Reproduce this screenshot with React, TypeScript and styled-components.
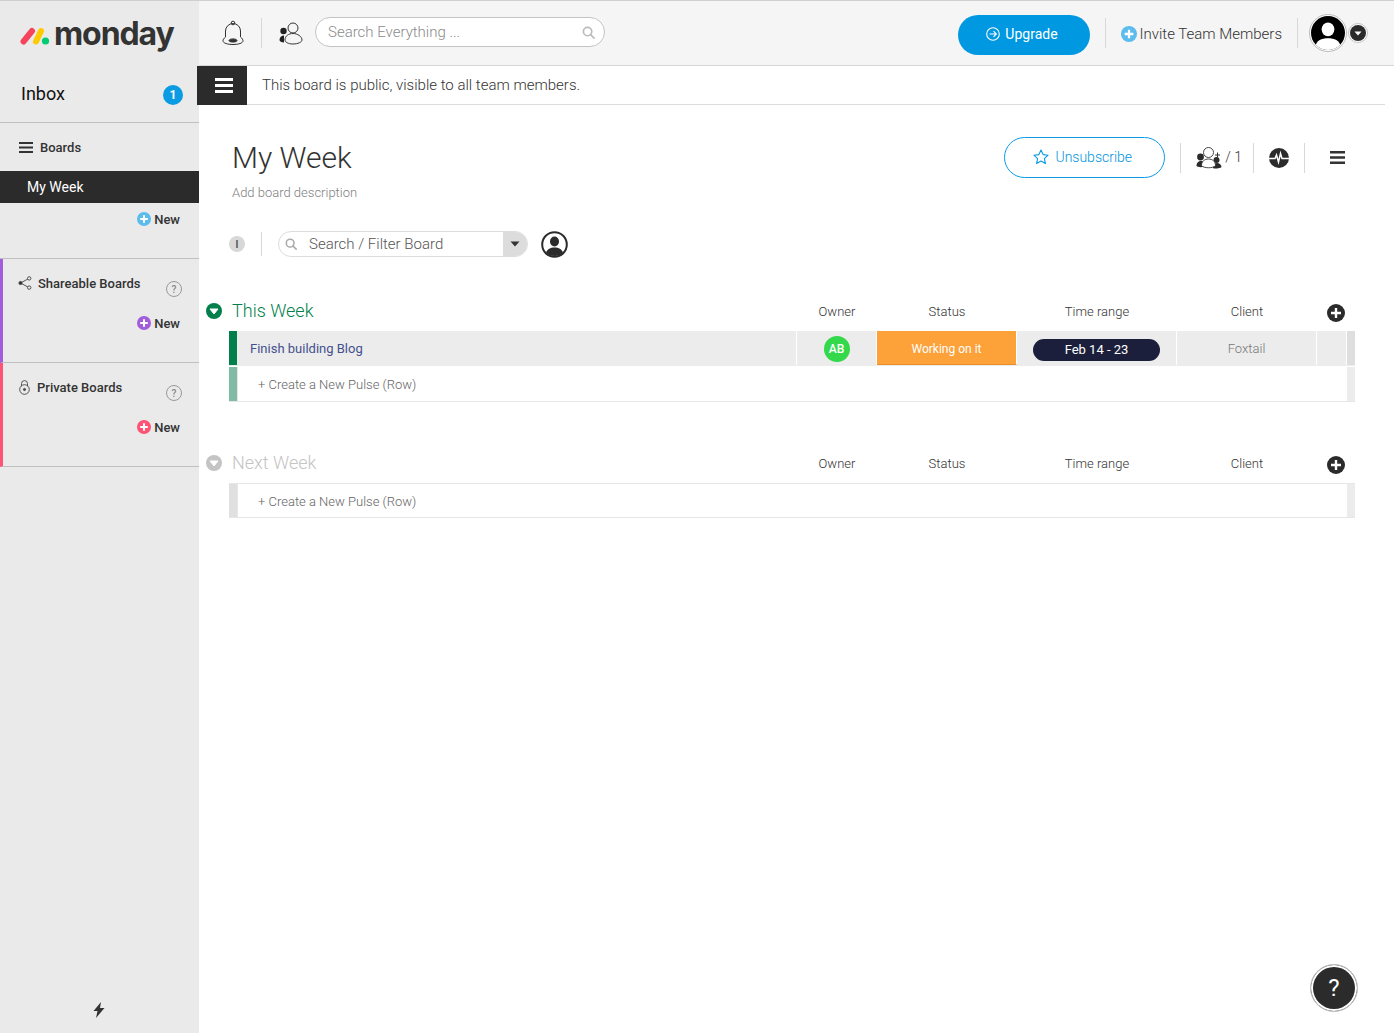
import React from 'react';
import styled, { createGlobalStyle } from 'styled-components';

const GlobalStyle = createGlobalStyle`
  html, body {
    margin: 0;
    padding: 0;
    background: #fff;
    font-family: Roboto, "Liberation Sans", sans-serif;
    color: #333;
  }
  * { box-sizing: border-box; }
`;

const Page = styled.div`
  display: flex;
  width: 1394px;
  height: 1033px;
  overflow: hidden;
  border-top: 1px solid #cfcfcf;
`;

/* sidebar */
const Sidebar = styled.aside`
  display: flex;
  flex-direction: column;
  flex-shrink: 0;
  width: 199px;
  background: #eaeaea;
`;
const LogoRow = styled.div`
  display: flex;
  align-items: center;
  height: 65px;
  padding: 4px 0 0 19px;
`;
const LogoWord = styled.span`
  font-family: Inter, sans-serif;
  font-size: 32px;
  font-weight: 700;
  letter-spacing: -1.1px;
  line-height: 1;
  color: #333;
  margin: -4px 0 0 3px;
`;
const InboxRow = styled.div`
  display: flex;
  align-items: center;
  justify-content: space-between;
  height: 57px;
  padding: 0 16px 2px 21px;
  border-bottom: 1px solid #bfbfbf;
  font-size: 18px;
  color: #111;
`;
const InboxBadge = styled.span`
  display: flex;
  align-items: center;
  justify-content: center;
  width: 20px;
  height: 20px;
  margin-top: 4px;
  border-radius: 50%;
  background: #0a9be3;
  color: #fff;
  font-size: 12px;
  font-weight: 700;
`;
const BoardSection = styled.section<{ $accent?: string; $height: number }>`
  height: ${({ $height }) => $height}px;
  border-left: ${({ $accent }) => ($accent ? `3px solid ${$accent}` : '0')};
  border-bottom: 1px solid #bfbfbf;
`;
const SectionHead = styled.div<{ $iconGap: number; $left: number }>`
  position: relative;
  display: flex;
  align-items: center;
  gap: ${({ $iconGap }) => $iconGap}px;
  height: 48px;
  padding-left: ${({ $left }) => $left}px;
  font-size: 13px;
  font-weight: 500;
  color: #333;
`;
const HelpDot = styled.span`
  position: absolute;
  top: 22px;
  right: 17px;
  display: flex;
  align-items: center;
  justify-content: center;
  width: 16px;
  height: 16px;
  border: 1px solid #999;
  border-radius: 50%;
  color: #888;
  font-size: 10px;
  font-weight: 500;
`;
const ActiveBoard = styled.div`
  display: flex;
  align-items: center;
  height: 32px;
  padding-left: 27px;
  background: #2b2b2b;
  color: #fff;
  font-size: 14px;
`;
const NewRow = styled.div`
  display: flex;
  align-items: center;
  justify-content: flex-end;
  gap: 3px;
  height: 32px;
  padding-right: 19px;
  font-size: 13px;
  font-weight: 500;
  color: #333;
`;
const SidebarFoot = styled.div`
  display: flex;
  justify-content: center;
  margin-top: auto;
  padding: 0 2px 15px 0;
`;

/* main column */
const Main = styled.main`
  display: flex;
  flex-direction: column;
  flex-grow: 1;
  min-width: 0;
`;
const TopBar = styled.header`
  display: flex;
  align-items: center;
  flex-shrink: 0;
  height: 65px;
  padding: 0 26px 0 23px;
  background: #f5f5f5;
  border-bottom: 1px solid #d6d6d6;
`;
const Divider = styled.span<{ $h?: number; $mx: number }>`
  flex-shrink: 0;
  width: 1px;
  height: ${({ $h }) => $h || 30}px;
  margin: 0 ${({ $mx }) => $mx}px;
  background: #d8d8d8;
`;
const GlobalSearch = styled.div`
  display: flex;
  align-items: center;
  justify-content: space-between;
  width: 290px;
  height: 30px;
  margin: -2px 0 0 12px;
  padding: 0 9px 0 12px;
  background: #fff;
  border: 1px solid #c4c4c4;
  border-radius: 15px;
  color: #8a8a8a;
  font-size: 15px;
  font-weight: 300;
`;
const UpgradeButton = styled.div`
  display: flex;
  align-items: center;
  justify-content: center;
  gap: 5px;
  width: 132px;
  height: 40px;
  margin: 4px 0 0 auto;
  padding: 0 5px 2px 0;
  border-radius: 20px;
  background: #0098e1;
  color: #fff;
  font-size: 14px;
`;
const InviteLink = styled.div`
  display: flex;
  align-items: center;
  gap: 2px;
  margin-top: 2px;
  color: #333;
  font-size: 15px;
  font-weight: 300;
  white-space: nowrap;
`;
const Avatar = styled.span`
  display: flex;
  align-items: center;
  justify-content: center;
  width: 38px;
  height: 38px;
  margin-left: -4px;
  padding: 1px;
  border: 1px solid #bdbdbd;
  border-radius: 50%;
  background: #fff;
`;
const AvatarCaret = styled.span`
  display: flex;
  margin-left: 1px;
`;
const NoticeBar = styled.div`
  display: flex;
  align-items: center;
  flex-shrink: 0;
  width: 1188px;
  height: 39px;
  margin-left: -2px;
  border-bottom: 1px solid #dcdcdc;
  font-size: 15px;
  font-weight: 300;
  color: #333;
`;
const MenuTab = styled.span`
  display: flex;
  align-items: center;
  justify-content: center;
  width: 50px;
  height: 39px;
  margin-right: 15px;
  padding-left: 4px;
  background: #2b2b2b;
`;
const BoardHeader = styled.div`
  display: flex;
  justify-content: space-between;
  padding: 32px 49px 0 33px;
`;
const BoardTitle = styled.h1`
  margin: 0;
  font-size: 30px;
  font-weight: 300;
  line-height: 42px;
  color: #333;
`;
const BoardDescription = styled.p`
  margin: 4px 0 0;
  font-size: 13px;
  font-weight: 300;
  line-height: 20px;
  color: #808080;
`;
const BoardActions = styled.div`
  display: flex;
  align-items: center;
  height: 41px;
  font-weight: 300;
`;
const SubscribeButton = styled.div`
  display: flex;
  align-items: center;
  justify-content: center;
  gap: 6px;
  width: 161px;
  height: 41px;
  padding: 0 4px 2px 0;
  border: 1px solid #0a9be3;
  border-radius: 21px;
  color: #0095de;
  font-size: 14px;
`;
const MemberCount = styled.span`
  margin-left: 2px;
  padding-bottom: 2px;
  font-size: 14px;
  color: #333;
`;
const ActionGlyph = styled.span<{ $left: number }>`
  display: flex;
  margin-left: ${({ $left }) => $left}px;
`;
const FilterRow = styled.div`
  display: flex;
  align-items: center;
  height: 26px;
  margin-top: 28px;
  padding-left: 30px;
`;
const InfoDot = styled.span`
  display: flex;
  align-items: center;
  justify-content: center;
  width: 16px;
  height: 16px;
  border-radius: 50%;
  background: #d8d8d8;
  color: #555;
  font-size: 10px;
  font-weight: 700;
`;
const BoardSearch = styled.div`
  display: flex;
  align-items: center;
  width: 250px;
  height: 26px;
  overflow: hidden;
  border: 1px solid #dcdcdc;
  border-radius: 13px;
  font-size: 15px;
  font-weight: 300;
  color: #555;
`;
const BoardSearchText = styled.span`
  flex-grow: 1;
  padding-left: 12px;
`;
const BoardSearchIcon = styled.span`
  display: flex;
  padding-left: 6px;
`;
const BoardSearchCaret = styled.span`
  display: flex;
  align-items: center;
  justify-content: center;
  width: 24px;
  height: 100%;
  background: #dcdcdc;
`;
const PersonFilter = styled.span`
  display: flex;
  margin-left: 13px;
`;

/* board groups */
const Groups = styled.div`
  display: flex;
  flex-direction: column;
  gap: 41px;
  margin-top: 34px;
  padding: 0 39px 0 7px;
`;
const GroupHead = styled.div`
  display: grid;
  grid-template-columns: 23px 1fr 80px 140px 160px 140px 38px;
  align-items: center;
  height: 40px;
`;
const GroupToggle = styled.span`
  display: flex;
`;
const GroupTitle = styled.h2<{ $color: string }>`
  margin: 0;
  padding: 0 0 2px 3px;
  color: ${({ $color }) => $color};
  font-size: 18px;
  font-weight: 300;
`;
const ColumnLabel = styled.span`
  color: #333;
  font-size: 13px;
  font-weight: 300;
  text-align: center;
`;
const ColumnAdd = styled.span`
  display: flex;
  justify-content: center;
  padding-top: 4px;
`;
const Row = styled.div<{ $outlined?: boolean; $ruledTop?: boolean }>`
  display: grid;
  grid-template-columns: 8px 1fr 80px 140px 160px 140px 30px 8px;
  height: 35px;
  margin-left: 23px;
  background: ${({ $outlined }) => ($outlined ? '#fff' : '#ececec')};
  border-bottom: 1px solid ${({ $outlined }) => ($outlined ? '#e6e6e6' : 'transparent')};
  border-top: ${({ $ruledTop }) => ($ruledTop ? '1px solid #e6e6e6' : '0')};
  & + & {
    margin-top: 1px;
  }
`;
const RowBar = styled.span<{ $color: string }>`
  background: ${({ $color }) => $color};
`;
const RowName = styled.span`
  display: flex;
  align-items: center;
  padding-left: 13px;
  border-right: 1px solid #fff;
  color: #44508e;
  font-size: 13px;
`;
const CreateLabel = styled.span`
  display: flex;
  align-items: center;
  grid-column: 2 / 8;
  padding: 1px 0 0 20px;
  border-left: 1px solid #e6e6e6;
  color: #666;
  font-size: 13px;
  font-weight: 300;
`;
const Cell = styled.span`
  display: flex;
  align-items: center;
  justify-content: center;
  border-right: 1px solid #fff;
`;
const OwnerBadge = styled.span`
  display: flex;
  align-items: center;
  justify-content: center;
  width: 26px;
  height: 26px;
  margin-top: 1px;
  border-radius: 50%;
  background: #33d94a;
  color: #fff;
  font-size: 12px;
  font-weight: 500;
`;
const StatusCell = styled(Cell)`
  padding-top: 2px;
  background: #fda139;
  border-bottom: 1px solid #e88f2c;
  color: #fff;
  font-size: 12px;
`;
const TimePill = styled.span`
  display: flex;
  align-items: center;
  justify-content: center;
  width: 127px;
  height: 22px;
  margin-top: 4px;
  padding-bottom: 2px;
  border-radius: 11px;
  background: #1c1f3b;
  color: #fff;
  font-size: 13px;
`;
const ClientCell = styled(Cell)`
  color: #777;
  font-size: 13px;
  font-weight: 300;
`;
const RowEnd = styled.span<{ $color: string }>`
  background: ${({ $color }) => $color};
`;
const HelpButton = styled.div`
  position: fixed;
  left: 1310px;
  top: 964px;
  display: flex;
  align-items: center;
  justify-content: center;
  width: 48px;
  height: 48px;
  border: 1px solid #c4c4c4;
  border-radius: 50%;
  background: #2b2b2b;
  box-shadow: inset 0 0 0 2px #fff;
  color: #fff;
  font-size: 24px;
`;

/* drawn icons */
const LogoMark = () => (
  <svg width="32" height="20" viewBox="0 0 32 20">
    <line x1="4.5" y1="15.5" x2="13" y2="5" stroke="#f5455c" strokeWidth="6" strokeLinecap="round" />
    <line x1="17" y1="15.5" x2="22" y2="5" stroke="#ffcb00" strokeWidth="6" strokeLinecap="round" />
    <circle cx="26.5" cy="15" r="3.6" fill="#00ca72" />
  </svg>
);
const PlusDisc = ({ color, size = 14 }: { color: string; size?: number }) => (
  <svg width={size} height={size} viewBox="0 0 14 14">
    <circle cx="7" cy="7" r="7" fill={color} />
    <path d="M7 3.2v7.6M3.2 7h7.6" stroke="#fff" strokeWidth="2" />
  </svg>
);
const Burger = ({ w, h, sw, color }: { w: number; h: number; sw: number; color: string }) => (
  <svg width={w} height={h} viewBox={`0 0 ${w} ${h}`}>
    <path d={`M0 ${sw / 2}H${w}M0 ${h / 2}H${w}M0 ${h - sw / 2}H${w}`} stroke={color} strokeWidth={sw} />
  </svg>
);
const ShareIcon = () => (
  <svg width="14" height="14" viewBox="0 0 14 14" fill="none" stroke="#444" strokeWidth="0.9">
    <path d="M2.5 7L11 2.4M2.5 7L11 11.6" />
    <circle cx="2.5" cy="7" r="1.6" fill="#333" />
    <circle cx="11.2" cy="2.4" r="1.7" fill="#eaeaea" />
    <circle cx="11.2" cy="11.6" r="1.7" fill="#eaeaea" />
  </svg>
);
const LockIcon = () => (
  <svg width="11" height="15" viewBox="0 0 11 15" fill="none" stroke="#444" strokeWidth="0.9">
    <path d="M2.5 6V3.6a3 3 0 0 1 6 0V6" />
    <circle cx="5.5" cy="9.5" r="4.8" />
    <circle cx="5.5" cy="9.5" r="1.1" fill="#444" />
  </svg>
);
const BellIcon = () => (
  <svg width="22" height="26" viewBox="0 0 22 26" fill="none" stroke="#333" strokeWidth="1">
    <circle cx="11" cy="3" r="1.8" />
    <path d="M3.5 17V11a7.5 7.5 0 0 1 15 0v6" />
    <path d="M3.5 17C1.5 18.5 1 20 1 21c0 2 4.5 3.5 10 3.5s10-1.5 10-3.5c0-1-.5-2.5-2.5-4" />
    <ellipse cx="11" cy="20.5" rx="4" ry="1.6" fill="#333" />
  </svg>
);
const PeopleIcon = () => (
  <svg width="24" height="23" viewBox="0 0 24 23">
    <circle cx="4.5" cy="9" r="3.2" fill="#222" />
    <path d="M0.5 18c0-3 2-4.5 4.5-4.5v7C2.5 20.5 0.5 19.5 0.5 18z" fill="#222" />
    <circle cx="14" cy="6" r="5" fill="#f5f5f5" stroke="#333" strokeWidth="1" />
    <path d="M6 18c0-4 3.5-6.5 8-6.5s9 3 9 6.5c0 2-4 4-9 4s-8-2-8-4z" fill="#f5f5f5" stroke="#333" strokeWidth="1" />
  </svg>
);
const SearchGlyph = ({ color, size }: { color: string; size: number }) => (
  <svg width={size} height={size} viewBox="0 0 14 14" fill="none" stroke={color} strokeWidth="1.8">
    <circle cx="6" cy="6" r="4.5" />
    <path d="M9.3 9.3L13 13" strokeLinecap="round" />
  </svg>
);
const ArrowCircle = () => (
  <svg width="14" height="14" viewBox="0 0 14 14" fill="none" stroke="#fff" strokeWidth="1.1">
    <circle cx="7" cy="7" r="6.3" />
    <path d="M3.5 7h6.5M7.5 4.2L10.3 7 7.5 9.8" />
  </svg>
);
const AvatarFace = ({ size, face, bg }: { size: number; face: string; bg: string }) => (
  <svg width={size} height={size} viewBox="0 0 32 32">
    <defs>
      <clipPath id={`face-${size}`}>
        <circle cx="16" cy="16" r="16" />
      </clipPath>
    </defs>
    <circle cx="16" cy="16" r="16" fill={bg} />
    <g clipPath={`url(#face-${size})`} fill={face}>
      <ellipse cx="16" cy="12.5" rx="6" ry="6.5" />
      <path d="M4 29c1-6 6-8 12-8s11 2 12 8v4H4z" />
    </g>
  </svg>
);
const CaretDisc = () => (
  <svg width="20" height="20" viewBox="0 0 20 20">
    <circle cx="10" cy="10" r="9.5" fill="#fff" stroke="#c4c4c4" />
    <circle cx="10" cy="10" r="8" fill="#2b2b2b" />
    <path d="M6.5 8.5h7L10 12.5z" fill="#fff" />
  </svg>
);
const StarIcon = () => (
  <svg width="16" height="16" viewBox="0 0 16 16" fill="none" stroke="#0a9be3" strokeWidth="1.1" strokeLinejoin="round">
    <path d="M8 1l2.1 4.6 5 .6-3.7 3.4 1 5L8 12.1 3.6 14.6l1-5L.9 6.2l5-.6z" />
  </svg>
);
const GroupIcon = () => (
  <svg width="27" height="22" viewBox="0 0 27 22">
    <circle cx="4.5" cy="10" r="3.4" fill="#2b2b2b" />
    <circle cx="20.5" cy="13" r="3" fill="#2b2b2b" />
    <path d="M0.5 19c0-3.5 2-5 4.5-5 2 0 4 1.5 4 5-1 1.5-7.5 1.5-8.5 0z" fill="#2b2b2b" />
    <path d="M17 21c0-3 1.5-5 4-5s4.500 2 4.500 4c-1 1.500-7.500 2-8.500 1z" fill="#2b2b2b" />
    <circle cx="12.500" cy="5.500" r="5" fill="#fff" stroke="#333" strokeWidth="0.900" />
    <path d="M5.500 18.500c0-4 3-6.500 7-6.500s7 2.500 7 6.500c-2 3-12 3-14 0z" fill="#fff" stroke="#333" strokeWidth="0.900" />
    <path d="M21.500 5.500v5M19 8h5" stroke="#333" strokeWidth="1" />
  </svg>
);
const PulseIcon = () => (
  <svg width="20" height="20" viewBox="0 0 20 20">
    <circle cx="10" cy="10" r="10" fill="#2b2b2b" />
    <path d="M0 10.500h6l1.500-3.500 2 7 2-8.500 1.500 5h7" fill="none" stroke="#fff" strokeWidth="1.500" />
  </svg>
);
const ToggleDisc = ({ color }: { color: string }) => (
  <svg width="16" height="16" viewBox="0 0 16 16">
    <circle cx="8" cy="8" r="8" fill={color} />
    <path d="M4 6h8L8 11z" fill="#fff" stroke="#fff" strokeLinejoin="round" />
  </svg>
);
const AddDisc = () => (
  <svg width="18" height="18" viewBox="0 0 18 18">
    <circle cx="9" cy="9" r="9" fill="#2b2b2b" />
    <path d="M9 4v10M4 9h10" stroke="#fff" strokeWidth="2.400" />
  </svg>
);
const SmallCaret = () => (
  <svg width="10" height="6" viewBox="0 0 10 6">
    <path d="M0.500 0.500h9L5 5.500z" fill="#333" />
  </svg>
);
const BoltIcon = () => (
  <svg width="12" height="16" viewBox="0 0 12 16">
    <path d="M8 0L0.500 9h4L3 16l8.500-10h-4.500z" fill="#333" />
  </svg>
);

const columns = ['Owner', 'Status', 'Time range', 'Client'];

const GroupHeader = ({ title, titleColor, toggleColor }: { title: string; titleColor: string; toggleColor: string }) => (
  <GroupHead>
    <GroupToggle>
      <ToggleDisc color={toggleColor} />
    </GroupToggle>
    <GroupTitle $color={titleColor}>{title}</GroupTitle>
    {columns.map((c) => (
      <ColumnLabel key={c}>{c}</ColumnLabel>
    ))}
    <ColumnAdd>
      <AddDisc />
    </ColumnAdd>
  </GroupHead>
);

export default function App() {
  return (
    <>
      <GlobalStyle />
      <Page>
        <Sidebar>
          <LogoRow>
            <LogoMark />
            <LogoWord>monday</LogoWord>
          </LogoRow>
          <InboxRow>
            Inbox
            <InboxBadge>1</InboxBadge>
          </InboxRow>
          <BoardSection $height={136}>
            <SectionHead $left={19} $iconGap={7}>
              <Burger w={14} h={11} sw={2} color="#333" />
              Boards
            </SectionHead>
            <ActiveBoard>My Week</ActiveBoard>
            <NewRow>
              <PlusDisc color="#5cbcee" />
              New
            </NewRow>
          </BoardSection>
          <BoardSection $height={104} $accent="#a25ddc">
            <SectionHead $left={15} $iconGap={6}>
              <ShareIcon />
              Shareable Boards
              <HelpDot>?</HelpDot>
            </SectionHead>
            <NewRow>
              <PlusDisc color="#a25ddc" />
              New
            </NewRow>
          </BoardSection>
          <BoardSection $height={104} $accent="#ff5376">
            <SectionHead $left={16} $iconGap={7}>
              <LockIcon />
              Private Boards
              <HelpDot>?</HelpDot>
            </SectionHead>
            <NewRow>
              <PlusDisc color="#ff5376" />
              New
            </NewRow>
          </BoardSection>
          <SidebarFoot>
            <BoltIcon />
          </SidebarFoot>
        </Sidebar>
        <Main>
          <TopBar>
            <BellIcon />
            <Divider $mx={17} />
            <PeopleIcon />
            <GlobalSearch>
              Search Everything ...
              <SearchGlyph color="#bbb" size={13} />
            </GlobalSearch>
            <UpgradeButton>
              <ArrowCircle />
              Upgrade
            </UpgradeButton>
            <Divider $mx={15} />
            <InviteLink>
              <PlusDisc color="#5cbcee" size={16} />
              Invite Team Members
            </InviteLink>
            <Divider $mx={15} />
            <Avatar>
              <AvatarFace size={34} face="#fff" bg="#000" />
            </Avatar>
            <AvatarCaret>
              <CaretDisc />
            </AvatarCaret>
          </TopBar>
          <NoticeBar>
            <MenuTab>
              <Burger w={18} h={15} sw={3} color="#fff" />
            </MenuTab>
            This board is public, visible to all team members.
          </NoticeBar>
          <BoardHeader>
            <div>
              <BoardTitle>My Week</BoardTitle>
              <BoardDescription>Add board description</BoardDescription>
            </div>
            <BoardActions>
              <SubscribeButton>
                <StarIcon />
                Unsubscribe
              </SubscribeButton>
              <Divider $mx={15} />
              <GroupIcon />
              <MemberCount>/ 1</MemberCount>
              <Divider $mx={11} />
              <ActionGlyph $left={4}>
                <PulseIcon />
              </ActionGlyph>
              <Divider $mx={15} />
              <ActionGlyph $left={10}>
                <Burger w={15} h={13} sw={2.4} color="#333" />
              </ActionGlyph>
            </BoardActions>
          </BoardHeader>
          <FilterRow>
            <InfoDot>I</InfoDot>
            <Divider $h={24} $mx={16} />
            <BoardSearch>
              <BoardSearchIcon>
                <SearchGlyph color="#aaa" size={12} />
              </BoardSearchIcon>
              <BoardSearchText>Search / Filter Board</BoardSearchText>
              <BoardSearchCaret>
                <SmallCaret />
              </BoardSearchCaret>
            </BoardSearch>
            <PersonFilter>
              <svg width="27" height="27" viewBox="0 0 27 27">
                <circle cx="13.5" cy="13.5" r="12.3" fill="#fff" stroke="#2b2b2b" strokeWidth="2" />
                <ellipse cx="13.5" cy="10.5" rx="4.5" ry="5" fill="#2b2b2b" />
                <path d="M5 22c1-4 4.5-5.5 8.5-5.5S21 18 22 22c-2 2-5 3-8.5 3S7 24 5 22z" fill="#2b2b2b" />
              </svg>
            </PersonFilter>
          </FilterRow>
          <Groups>
            <div>
              <GroupHeader title="This Week" titleColor="#037f4c" toggleColor="#037f4c" />
              <Row>
                <RowBar $color="#037f4c" />
                <RowName>Finish building Blog</RowName>
                <Cell>
                  <OwnerBadge>AB</OwnerBadge>
                </Cell>
                <StatusCell>Working on it</StatusCell>
                <Cell>
                  <TimePill>Feb 14 - 23</TimePill>
                </Cell>
                <ClientCell>Foxtail</ClientCell>
                <Cell />
                <RowEnd $color="#dedede" />
              </Row>
              <Row $outlined>
                <RowBar $color="#81bba5" />
                <CreateLabel>+ Create a New Pulse (Row)</CreateLabel>
                <RowEnd $color="#ececec" />
              </Row>
            </div>
            <div>
              <GroupHeader title="Next Week" titleColor="#c4c4c4" toggleColor="#c4c4c4" />
              <Row $outlined $ruledTop>
                <RowBar $color="#e0e0e0" />
                <CreateLabel>+ Create a New Pulse (Row)</CreateLabel>
                <RowEnd $color="#ececec" />
              </Row>
            </div>
          </Groups>
        </Main>
      </Page>
      <HelpButton>?</HelpButton>
    </>
  );
}
